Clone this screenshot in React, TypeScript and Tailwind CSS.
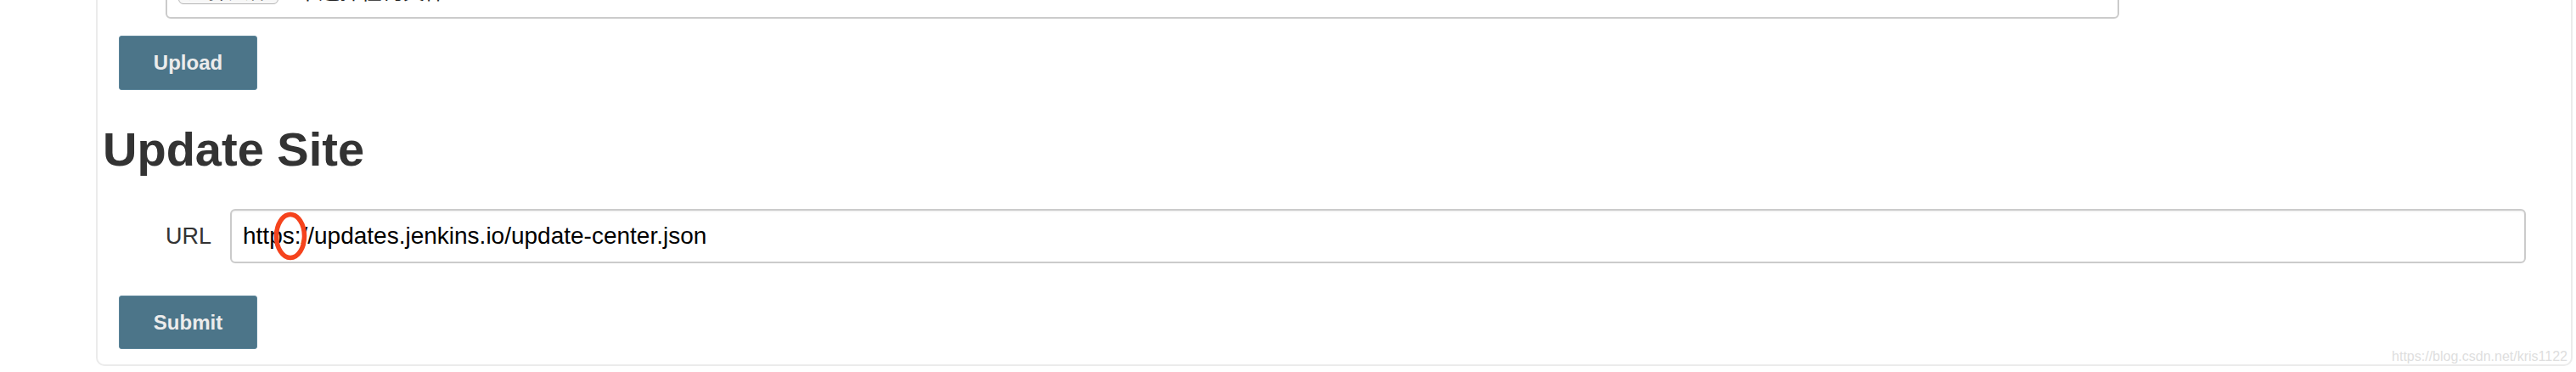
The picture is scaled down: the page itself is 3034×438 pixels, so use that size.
import React from 'react';

export default function App() {
  const updateUrl = 'https://updates.jenkins.io/update-center.json';

  return (
    <div className="h-[438px] w-[3034px] overflow-hidden bg-white font-['Liberation_Sans',Arial,sans-serif]">
      {/* Panel (top is scrolled out of view) */}
      <div className="relative -mt-[60px] ml-[113px] mr-[4px] rounded-b-[10px] border-2 border-t-0 border-[#ebebeb] pb-[18px]">
        {/* Upload plugin: file row */}
        <div className="flex items-center pt-[18px]">
          <div className="w-[61px] pb-[4px] text-right text-[27px] leading-[32px] text-[#333]">File</div>
          <div className="ml-[19px] flex h-[64px] w-[2301px] items-center rounded-[6px] border-2 border-[#cbcbcb] px-[13px] pb-[4px]">
            <button className="h-[34px] w-[118px] rounded-[6px] border border-[#b5b5b5] bg-[#f7f7f7] text-[24px] leading-[30px] text-[#111] font-['Noto_Sans_CJK_SC',sans-serif]">
              选择文件
            </button>
            <span className="ml-[22px] text-[25px] leading-[30px] text-[#222] font-['Noto_Sans_CJK_SC',sans-serif]">未选择任何文件</span>
          </div>
        </div>

        <button className="ml-[25px] mt-[20px] block h-[64px] w-[163px] rounded-[3px] border border-[#5a8499] bg-[#4c7589] text-[24px] font-bold text-[#ececec]">
          Upload
        </button>

        {/* Update Site */}
        <h1 className="ml-[6px] mt-[36px] text-[56px] font-bold leading-[67px] text-[#333]">Update Site</h1>

        <div className="mt-[37px] flex items-center">
          <label className="w-[134px] text-right text-[27px] leading-[32px] text-[#333]">URL</label>
          <div className="relative ml-[22px] mr-[53px] flex-1">
            <input
              readOnly
              value={updateUrl}
              className="block h-[64px] w-full rounded-[6px] border-2 border-[#cbcbcb] px-[13px] text-[28px] text-black shadow-[inset_0_1px_2px_rgba(0,0,0,0.08)] outline-none"
            />
            {/* red annotation circle */}
            <svg className="absolute left-[51px] top-[3px]" width="40" height="58" viewBox="0 0 40 58">
              <ellipse cx="20" cy="29" rx="16.5" ry="25.5" fill="none" stroke="#f5431d" strokeWidth="5.5" />
            </svg>
          </div>
        </div>

        <button className="ml-[25px] mt-[38px] block h-[63px] w-[163px] rounded-[3px] border border-[#5a8499] bg-[#4c7589] text-[24px] font-bold text-[#ececec]">
          Submit
        </button>

        <span className="absolute bottom-0 right-[4px] text-[16px] leading-[18px] text-[#dedede]">https://blog.csdn.net/kris1122</span>
      </div>
    </div>
  );
}
